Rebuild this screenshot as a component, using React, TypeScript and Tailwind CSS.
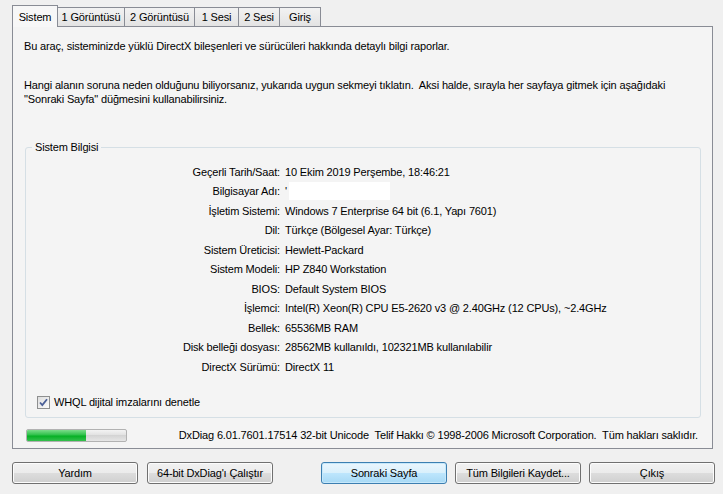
import React from "react";

const rows: [string, React.ReactNode][] = [
  ["Geçerli Tarih/Saat:", "10 Ekim 2019 Perşembe, 18:46:21"],
  [
    "Bilgisayar Adı:",
    <span className="inline-flex items-center">
      <span>'</span>
      <span className="inline-block bg-white w-[101px] h-[18px] ml-[2px]" />
    </span>,
  ],
  ["İşletim Sistemi:", "Windows 7 Enterprise 64 bit (6.1, Yapı 7601)"],
  ["Dil:", "Türkçe (Bölgesel Ayar: Türkçe)"],
  ["Sistem Üreticisi:", "Hewlett-Packard"],
  ["Sistem Modeli:", "HP Z840 Workstation"],
  ["BIOS:", "Default System BIOS"],
  ["İşlemci:", "Intel(R) Xeon(R) CPU E5-2620 v3 @ 2.40GHz (12 CPUs), ~2.4GHz"],
  ["Bellek:", "65536MB RAM"],
  ["Disk belleği dosyası:", "28562MB kullanıldı, 102321MB kullanılabilir"],
  ["DirectX Sürümü:", "DirectX 11"],
];

const tabs = [
  { label: "1 Görüntüsü", w: "w-[68px]" },
  { label: "2 Görüntüsü", w: "w-[70px]" },
  { label: "1 Sesi", w: "w-[44px]" },
  { label: "2 Sesi", w: "w-[41px]" },
  { label: "Giriş", w: "w-[41px]" },
];

function Btn({ label, x, primary }: { label: string; x?: string; primary?: boolean }) {
  return (
    <div
      className={
        "w-[126px] h-[22px] rounded-[3px] border flex items-center justify-center text-[11px] text-black " +
        (primary
          ? "border-[#3c7fb1] bg-[linear-gradient(to_bottom,#eaf6fd_0%,#d9f0fc_50%,#bee6fd_50%,#a7d9f5_100%)] shadow-[inset_0_0_0_1px_#c6e8fb]"
          : "border-[#707070] bg-[linear-gradient(to_bottom,#f2f2f2_0%,#ebebeb_50%,#dddddd_50%,#cfcfcf_100%)] shadow-[inset_0_0_0_1px_#fcfcfc]") +
        " " +
        (x || "")
      }
    >
      {label}
    </div>
  );
}

export default function App() {
  return (
    <div
      className="w-[723px] h-[494px] bg-[#f0f0f0] text-black overflow-hidden tracking-[-0.15px]"
      style={{ fontFamily: '"Liberation Sans", Arial, sans-serif' }}
    >
      <div className="pt-[5px] pl-[12px] pr-[10px]">
        {/* Tabs */}
        <div className="flex items-end h-[21px]">
          <div className="relative z-10 w-[46px] h-[22px] -mb-px border border-b-0 border-[#898c95] bg-[#f7f7f7] flex items-start justify-center pt-[3px] text-[11px]">
            Sistem
          </div>
          {tabs.map((t, i) => (
            <div
              key={t.label}
              className={
                t.w +
                " h-[19px] border-t border-r border-[#898c95] bg-[linear-gradient(to_bottom,#f2f2f2,#e3e3e3)] flex items-center justify-center text-[11px] " +
                (i === 0 ? "-ml-px border-l" : "")
              }
            >
              {t.label}
            </div>
          ))}
        </div>
        {/* Panel */}
        <div className="h-[423px] w-[701px] border border-[#898c95] bg-[#f4f4f4] flex flex-col text-[11px]">
          <div className="pl-[11px] pt-[12px] leading-[14px]">
            Bu araç, sisteminizde yüklü DirectX bileşenleri ve sürücüleri hakkında detaylı bilgi raporlar.
          </div>
          <div className="pl-[11px] pt-[25px] leading-[14px]">
            Hangi alanın soruna neden olduğunu biliyorsanız, yukarıda uygun sekmeyi tıklatın.&nbsp; Aksi halde, sırayla her sayfaya gitmek için aşağıdaki
            <br />
            "Sonraki Sayfa" düğmesini kullanabilirsiniz.
          </div>
          {/* Group box */}
          <div className="relative ml-[12px] mt-[41px] w-[676px] h-[271px] border border-[#d5dfe5] rounded-[3px]">
            <div className="absolute -top-[8px] left-[6px] px-[3px] bg-[#f4f4f4] leading-[14px] text-[11px]">
              Sistem Bilgisi
            </div>
            <div className="pt-[14px] flex flex-col">
              {rows.map(([k, v]) => (
                <div key={k} className="flex h-[19.5px] items-center">
                  <div className="w-[254px] text-right shrink-0">{k}</div>
                  <div className="pl-[5px] whitespace-nowrap">{v}</div>
                </div>
              ))}
            </div>
            <div className="absolute left-[11px] top-[246px] flex items-center gap-[4px]">
              <div className="w-[13px] h-[13px] border border-[#8e8f8f] bg-[linear-gradient(135deg,#dedede,#fbfbfb)] flex items-center justify-center">
                <svg width="11" height="11" viewBox="0 0 11 11">
                  <path d="M2 5.5 L4.3 8 L9 2.2" fill="none" stroke="#4a5f97" strokeWidth="1.8" />
                </svg>
              </div>
              <span>WHQL dijital imzalarını denetle</span>
            </div>
          </div>
          {/* Bottom status */}
          <div className="flex items-center mt-[9px]">
            <div className="ml-[13px] w-[101px] h-[13px] rounded-[2px] border border-[#b2b2b2] bg-[linear-gradient(to_bottom,#f3f3f3,#e0e0e0_50%,#d4d4d4_50%,#e6e6e6)] overflow-hidden flex">
              <div className="w-[59px] h-full bg-[linear-gradient(to_bottom,#7cdc8b,#2ec14a_45%,#06b025_55%,#35c04e)]" />
            </div>
            <div className="ml-auto mr-[14px] whitespace-nowrap">
              DxDiag 6.01.7601.17514 32-bit Unicode&nbsp; Telif Hakkı © 1998-2006 Microsoft Corporation.&nbsp; Tüm hakları saklıdır.
            </div>
          </div>
        </div>
      </div>
      {/* Buttons */}
      <div className="flex mt-[13px] pl-[12px]">
        <Btn label="Yardım" />
        <Btn label="64-bit DxDiag'ı Çalıştır" x="ml-[9px]" />
        <Btn label="Sonraki Sayfa" x="ml-[48px]" primary />
        <Btn label="Tüm Bilgileri Kaydet..." x="ml-[8px]" />
        <Btn label="Çıkış" x="ml-[8px]" />
      </div>
    </div>
  );
}
